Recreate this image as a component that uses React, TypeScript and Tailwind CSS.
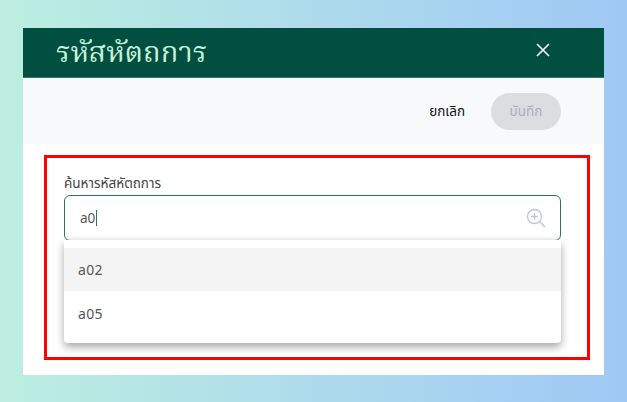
import React from "react";

const font = { fontFamily: '"Noto Sans", "Noto Sans Thai", "DejaVu Sans", sans-serif' };
const titleFont = { fontFamily: '"Noto Serif Thai", "Liberation Serif", serif' };

export default function App() {
  return (
    <div
      className="flex h-[402px] w-[627px] flex-col overflow-hidden bg-gradient-to-r from-[#bdeee0] to-[#a0c8f5] pl-[23px] pr-[23px] pt-[28px] pb-[27px]"
      style={font}
    >
      <div className="flex h-[347px] w-[581px] flex-col bg-white">
        <div className="flex h-[50px] shrink-0 items-center justify-between border-b border-[#3d7468] bg-[#004f41] pl-[33px] pr-[54px]">
          <h1 className="mt-[3px] text-[29px] leading-[46px] text-[#c9f2d8]" style={titleFont}>รหัสหัตถการ</h1>
          <svg width="14" height="14" viewBox="0 0 14 14" className="mb-[6px]" fill="none" stroke="white" strokeWidth="1.6">
            <path d="M1 1 L13 13 M13 1 L1 13" />
          </svg>
        </div>
        <div className="flex h-[66px] shrink-0 items-center justify-end gap-[26px] bg-[#f8f9fb] pr-[43px]">
          <span className="text-[13.5px] text-[#111]">ยกเลิก</span>
          <button className="flex h-[37px] w-[70px] items-center justify-center rounded-full bg-[#dcdde0] text-[13.5px] text-[#a5aebf]">
            บันทึก
          </button>
        </div>
        <div className="ml-[21px] mt-[11px] h-[205px] w-[546px] border-[3px] border-[#ff0000] pl-[17px] pr-[26px] pt-[17px]">
          <div className="mb-[3px] h-[17px] text-[13.5px] leading-[17px] text-[#444]">ค้นหารหัสหัตถการ</div>
          <div className="relative">
            <div className="flex h-[46px] w-[497px] items-center justify-between rounded-[6px] border border-[#2f6f60] pl-[15px] pr-[14px] shadow-[inset_0_-6px_6px_-6px_rgba(0,0,0,0.08)]">
              <span className="flex h-[17px] items-center text-[13.5px] text-[#555]">
                a0
                <span className="ml-px h-[16px] w-px bg-[#2f6f60]" />
              </span>
              <svg width="20" height="20" viewBox="0 0 20 20" fill="none" stroke="#bcc7d3" strokeWidth="1.4">
                <circle cx="8.5" cy="8.5" r="7" />
                <path d="M13.7 13.7 L19 19 M8.5 5 V12 M5 8.5 H12" />
              </svg>
            </div>
            <div className="absolute left-0 top-[45px] w-[497px] rounded-b-[4px] bg-white pb-[9px] pt-[8px] shadow-[0_4px_8px_rgba(0,0,0,0.35)]">
              <div className="flex h-[43px] items-center bg-[#f4f4f4] pl-[14px] text-[14px] tracking-[0.3px] text-[#555]">a02</div>
              <div className="flex h-[43px] items-center pl-[14px] text-[14px] tracking-[0.3px] text-[#555]"><span className="mt-[2px]">a05</span></div>
            </div>
          </div>
        </div>
      </div>
    </div>
  );
}
